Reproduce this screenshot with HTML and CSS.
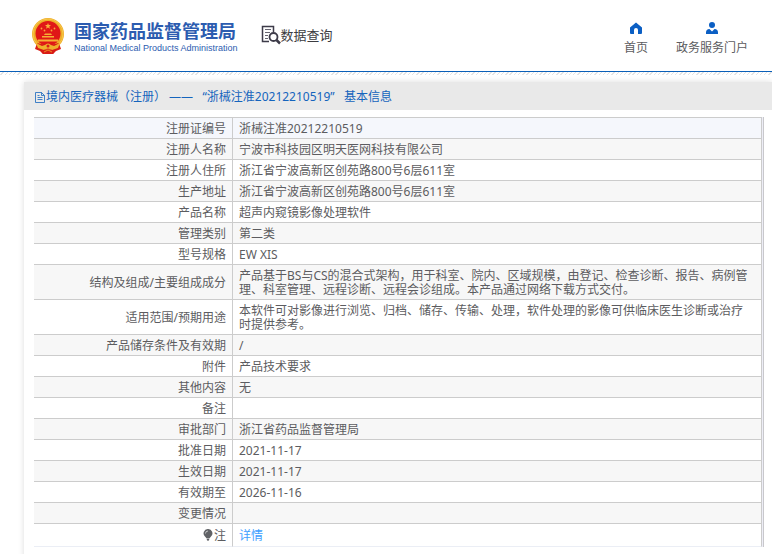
FILE: index.html
```html
<!DOCTYPE html>
<html lang="zh-CN">
<head>
<meta charset="utf-8">
<title>国家药品监督管理局 数据查询</title>
<link rel="stylesheet" href="styles.css">
</head>
<body>
<header class="header">
  <a class="brand" href="#">
    <svg class="emblem" viewBox="0 0 32 36" aria-hidden="true">
      <path d="M5 25 L3 31 L8 33 L11 36 H21 L24 33 L29 31 L27 25Z" fill="#d91c16"/>
      <circle cx="16" cy="16" r="16" fill="#efad28"/>
      <circle cx="16" cy="16" r="15" fill="none" stroke="#f7c84b" stroke-width="1"/>
      <circle cx="16" cy="15.500" r="12.500" fill="#e01717"/>
      <path d="M16 5l.8 2 2.200.1-1.700 1.400.6 2.200-1.900-1.200-1.900 1.200.6-2.200-1.700-1.400 2.200-.1z" fill="#fbb03a"/>
      <g fill="#f9a63a"><circle cx="9.500" cy="10.500" r=".9"/><circle cx="22.500" cy="10.500" r=".9"/><circle cx="12.500" cy="12.500" r=".9"/><circle cx="19.500" cy="12.500" r=".9"/></g>
      <path d="M12 17l1-1.500h6l1 1.500zM10 18h12v1.500H10zM6 21.500h20v2H6z" fill="#f5b135"/>
      <path d="M5 25q11 3 22 0l-3 4q-8 3-16 0z" fill="#d91c16"/>
      <path d="M4 25l6 3 3-1q3-3 6 0l3 1 6-3-2 5-6 2-4-2-4 2-6-2z" fill="#efb02c"/>
      <circle cx="16" cy="28" r="1.500" fill="#d91c16"/>
      <path d="M9 32.500l7-1.500 7 1.500-2 3.500H11z" fill="#d91c16"/>
      <path d="M12 34l4-2 4 2" fill="none" stroke="#efad28" stroke-width=".8"/>
    </svg>
    <span class="brand-text">
      <span class="brand-name">国家药品监督管理局</span>
      <span class="brand-sub">National Medical Products Administration</span>
    </span>
  </a>
  <a class="query" href="#">
    <svg class="query-icon" viewBox="0 0 20 20" fill="none" stroke="#3d3b49" aria-hidden="true">
      <path d="M8 16.500H1.500V1.500h11V7" stroke-width="1.500"/>
      <path d="M4 4.500h6M4 7.500h5M4 10.500h3M4 13.500h3" stroke="#666470"/>
      <circle cx="12.500" cy="12" r="4" stroke-width="1.800"/>
      <path d="M15.500 15l3.500 3.500" stroke-width="2.500"/>
    </svg>
    <span>数据查询</span>
  </a>
  <nav class="nav">
    <a class="nav-link" href="#">
      <svg class="nav-icon" viewBox="0 0 12 12" fill="#0b5fc4" aria-hidden="true"><path d="M6 .5 12 5.500V11a1 1 0 0 1-1 1H8V8a2 2 0 0 0-4 0v4H1a1 1 0 0 1-1-1V5.500z"/></svg>
      <span>首页</span>
    </a>
    <a class="nav-link" href="#">
      <svg class="nav-icon" viewBox="0 0 12 12" fill="#0b5fc4" aria-hidden="true"><circle cx="6" cy="3" r="3"/><path d="M0 12V10.500Q0 7 3.500 7L6 9.500 8.500 7Q12 7 12 10.500V12z"/></svg>
      <span>政务服务门户</span>
    </a>
  </nav>
</header>
<div class="hatch"></div>
<main class="panel">
  <h1 class="panel-title">
    <svg class="doc-icon" viewBox="0 0 10 12" fill="none" stroke="#1464bd" stroke-width=".8" aria-hidden="true"><path d="M.5 1.500h6l3 3v7h-9zM6.500 1.500v3h3M2.500 4.500h2M2.500 6.500h5M2.500 8.500h5"/></svg>
    <span>境内医疗器械（注册） —— &nbsp;&nbsp;“浙械注准20212210519” &nbsp;&nbsp;基本信息</span>
  </h1>
  <div class="panel-body">
    <table class="info">
      <tbody>
        <tr class="current"><th scope="row">注册证编号</th><td>浙械注准20212210519</td></tr>
        <tr><th scope="row">注册人名称</th><td>宁波市科技园区明天医网科技有限公司</td></tr>
        <tr><th scope="row">注册人住所</th><td>浙江省宁波高新区创苑路800号6层611室</td></tr>
        <tr><th scope="row">生产地址</th><td>浙江省宁波高新区创苑路800号6层611室</td></tr>
        <tr><th scope="row">产品名称</th><td>超声内窥镜影像处理软件</td></tr>
        <tr><th scope="row">管理类别</th><td>第二类</td></tr>
        <tr><th scope="row">型号规格</th><td>EW XIS</td></tr>
        <tr><th scope="row">结构及组成/主要组成成分</th><td>产品基于BS与CS的混合式架构，用于科室、院内、区域规模，由登记、检查诊断、报告、病例管理、科室管理、远程诊断、远程会诊组成。本产品通过网络下载方式交付。</td></tr>
        <tr><th scope="row">适用范围/预期用途</th><td>本软件可对影像进行浏览、归档、储存、传输、处理，软件处理的影像可供临床医生诊断或治疗时提供参考。</td></tr>
        <tr><th scope="row">产品储存条件及有效期</th><td>/</td></tr>
        <tr><th scope="row">附件</th><td>产品技术要求</td></tr>
        <tr><th scope="row">其他内容</th><td>无</td></tr>
        <tr><th scope="row">备注</th><td></td></tr>
        <tr><th scope="row">审批部门</th><td>浙江省药品监督管理局</td></tr>
        <tr><th scope="row">批准日期</th><td>2021-11-17</td></tr>
        <tr><th scope="row">生效日期</th><td>2021-11-17</td></tr>
        <tr><th scope="row">有效期至</th><td>2026-11-16</td></tr>
        <tr><th scope="row">变更情况</th><td></td></tr>
        <tr class="note"><th scope="row"><svg class="bulb" viewBox="0 0 10 12" aria-hidden="true"><path d="M5 0a4.300 4.300 0 0 1 3 7.500L6.300 9.500H3.700L2 7.500A4.300 4.300 0 0 1 5 0zM3.800 10h2.400v1L5 12 3.800 11z" fill="#606266"/><path d="M2.500 4.500Q2.500 2 5 2" fill="none" stroke="#ddd" stroke-width=".8"/></svg>注</th><td><a class="detail" href="#">详情</a></td></tr>
      </tbody>
    </table>
  </div>
</main>
</body>
</html>
```
FILE: styles.css
```css
* {
  box-sizing: border-box;
}

body {
  margin: 0;
  background: #fff;
  color: #5c5c60;
  font: 12px/14px "Noto Sans", "Noto Sans CJK SC", sans-serif;
  overflow: hidden;
}

a {
  color: inherit;
  text-decoration: none;
}

.header {
  display: flex;
  align-items: center;
  height: 72px;
  padding: 0 24px 0 32px;
  border-bottom: 1px solid #0a5fb8;
}

.hatch {
  height: 3px;
  background: repeating-linear-gradient(135deg, #fff 0 2px, #e4e4e4 2px 3px);
}

.brand {
  display: flex;
  align-items: center;
  gap: 10px;
}

.emblem {
  width: 32px;
  height: 36px;
}

.brand-text {
  display: flex;
  flex-direction: column;
  gap: 2px;
  color: #2c5cb0;
}

.brand-name {
  font-family: "Noto Sans CJK SC", sans-serif;
  font-size: 18px;
  font-weight: 700;
  line-height: 22px;
  white-space: nowrap;
}

.brand-sub {
  font-family: "Liberation Sans", sans-serif;
  font-size: 9px;
  line-height: 10px;
  white-space: nowrap;
}

.query {
  display: flex;
  align-items: center;
  margin-left: 23px;
  padding-bottom: 2px;
  color: #3c3c40;
  font-size: 13px;
  white-space: nowrap;
}

.query-icon {
  width: 20px;
  height: 20px;
}

.nav {
  display: flex;
  gap: 28px;
  margin-left: auto;
  padding-top: 5px;
}

.nav-link {
  display: flex;
  flex-direction: column;
  align-items: center;
  gap: 7px;
  white-space: nowrap;
}

.nav-icon {
  width: 12px;
  height: 12px;
}

.panel {
  margin: 7px 0 0 24px;
  box-shadow: 0 0 6px #ddd;
  background: #fff;
}

.panel-title {
  display: flex;
  align-items: center;
  gap: 1px;
  height: 28px;
  margin: 0;
  padding: 2px 11px 0;
  background: #e9e9e9;
  color: #1464bd;
  font-size: 12px;
  font-weight: 400;
  white-space: nowrap;
}

.doc-icon {
  width: 10px;
  height: 12px;
}

.panel-body {
  padding: 7px 8px 16px 10px;
}

.info {
  width: 100%;
  border-collapse: separate;
  border-spacing: 0;
  border-right: 1px solid #c8c8cc;
  padding-right: 1px;
  background: #ededf6;
}

.info th,
.info td {
  padding: 4px 6px 2px;
  border-top: 1px solid #ccc;
  background: #fff;
  font-weight: 400;
  text-align: left;
  vertical-align: middle;
}

.info th {
  width: 199px;
  border-right: 1px solid #ccc;
  text-align: right;
}

.info td {
  padding-right: 12px;
  border-right: 1px solid #ccc;
}

.info tr:nth-child(even) > * {
  background: #f7f7f7;
}

.info .current > * {
  background: #f5f7fc;
}

.info .note > * {
  padding-top: 5px;
  padding-bottom: 3px;
  border-bottom: 1px solid #ebeef5;
}

.bulb {
  width: 10px;
  height: 12px;
  margin-right: 1px;
  vertical-align: -1px;
}

.detail {
  color: #409eff;
}
```
